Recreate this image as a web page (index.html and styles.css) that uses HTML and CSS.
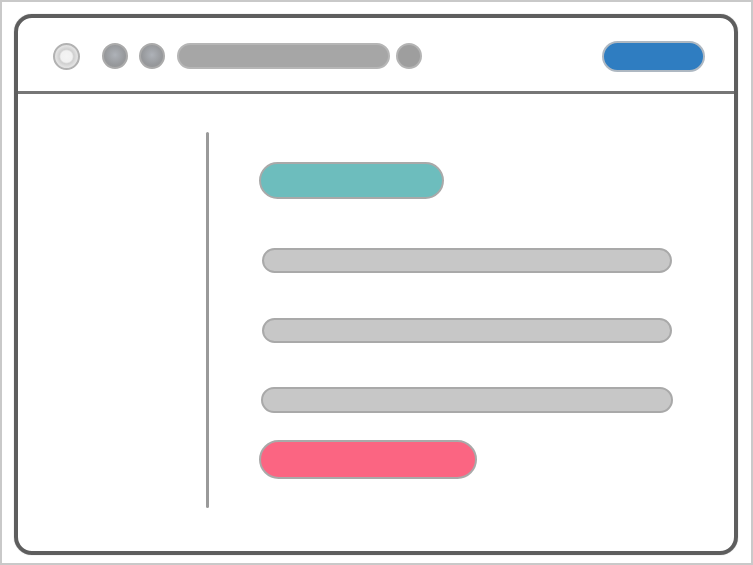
FILE: index.html
```html
<!DOCTYPE html>
<html lang="en">
<head>
    <meta charset="UTF-8">
    <meta name="viewport" content="width=device-width, initial-scale=1.0">
    <title>Browser Wireframe</title>

    <link rel="stylesheet" href="styles.css">
</head>
<body>
    <div class="page">
        <div class="window">
            <div class="toolbar">
                <span class="dot dot-light"></span>
                <span class="dot dot-back"></span>
                <span class="dot dot-forward"></span>
                <span class="address"></span>
                <span class="dot dot-reload"></span>
                <span class="action"></span>
            </div>

            <div class="content">
                <div class="sidebar"></div>
                <div class="divider"></div>
                <div class="main">
                    <div class="bar bar-title"></div>
                    <div class="bar bar-line line-1"></div>
                    <div class="bar bar-line line-2"></div>
                    <div class="bar bar-line line-3"></div>
                    <div class="bar bar-cta"></div>
                </div>
            </div>
        </div>
    </div>
</body>
</html>
```

FILE: styles.css
```css
* {
    box-sizing: border-box;
}

body {
    margin: 0;
    font-family: 'Liberation Sans', Arial, sans-serif;
    background: #ffffff;
}

.page {
    width: 753px;
    height: 565px;
    padding: 12px 10px 8px 12px;
    border: 2px solid #c9c9c9;
    background: #ffffff;
}

.window {
    width: 724px;
    height: 541px;
    border: 4px solid #5e5e5e;
    border-radius: 18px;
    display: flex;
    flex-direction: column;
    overflow: hidden;
    box-shadow: 0 0 1px rgba(0, 0, 0, 0.4);
}

.toolbar {
    height: 76px;
    flex: none;
    border-bottom: 3px solid #767676;
    display: flex;
    align-items: center;
    padding: 3px 29px 0 35px;
}

.dot {
    width: 26px;
    height: 26px;
    border-radius: 50%;
    flex: none;
    border: 2px solid #ababab;
    background: radial-gradient(circle at 50% 45%, #aeb2b8 0, #97999c 60%, #929292 100%);
}

.dot-light {
    width: 27px;
    height: 27px;
    background: radial-gradient(circle, #f4f4f4 0, #f1f1f1 35%, #cfcfcf 45%, #e2e2e2 65%, #d0d0d0 100%);
    border-color: #b2b2b2;
}

.dot-back {
    margin-left: 22px;
}

.dot-forward {
    margin-left: 11px;
}

.dot-reload {
    margin-left: 6px;
    background: #9e9e9e;
    border-color: #b4b4b4;
}

.address {
    margin-left: 12px;
    width: 213px;
    height: 26px;
    border-radius: 13px;
    background: #a6a6a6;
    border: 2px solid #b6b6b6;
}

.action {
    margin-left: auto;
    width: 103px;
    height: 31px;
    border-radius: 16px;
    background: #2f7dc1;
    border: 2px solid #aeb8c2;
}

.content {
    flex: 1;
    display: flex;
    align-items: flex-start;
    padding-top: 38px;
}

.sidebar {
    width: 188px;
    flex: none;
}

.divider {
    width: 3px;
    height: 376px;
    flex: none;
    border-radius: 2px;
    background: #9a9a9a;
}

.main {
    flex: 1;
    padding-top: 30px;
    padding-left: 50px;
}

.bar {
    border-radius: 20px;
    border: 2px solid #a9a9a9;
}

.bar-title {
    width: 185px;
    height: 37px;
    background: #6dbdbd;
}

.bar-line {
    margin-left: 3px;
    width: 410px;
    height: 25px;
    background: #c7c7c7;
}

.line-1 {
    margin-top: 49px;
}

.line-2 {
    margin-top: 45px;
}

.line-3 {
    margin-top: 44px;
    margin-left: 2px;
    width: 412px;
    height: 26px;
}

.bar-cta {
    margin-top: 27px;
    width: 218px;
    height: 39px;
    background: #fb6582;
}
```
